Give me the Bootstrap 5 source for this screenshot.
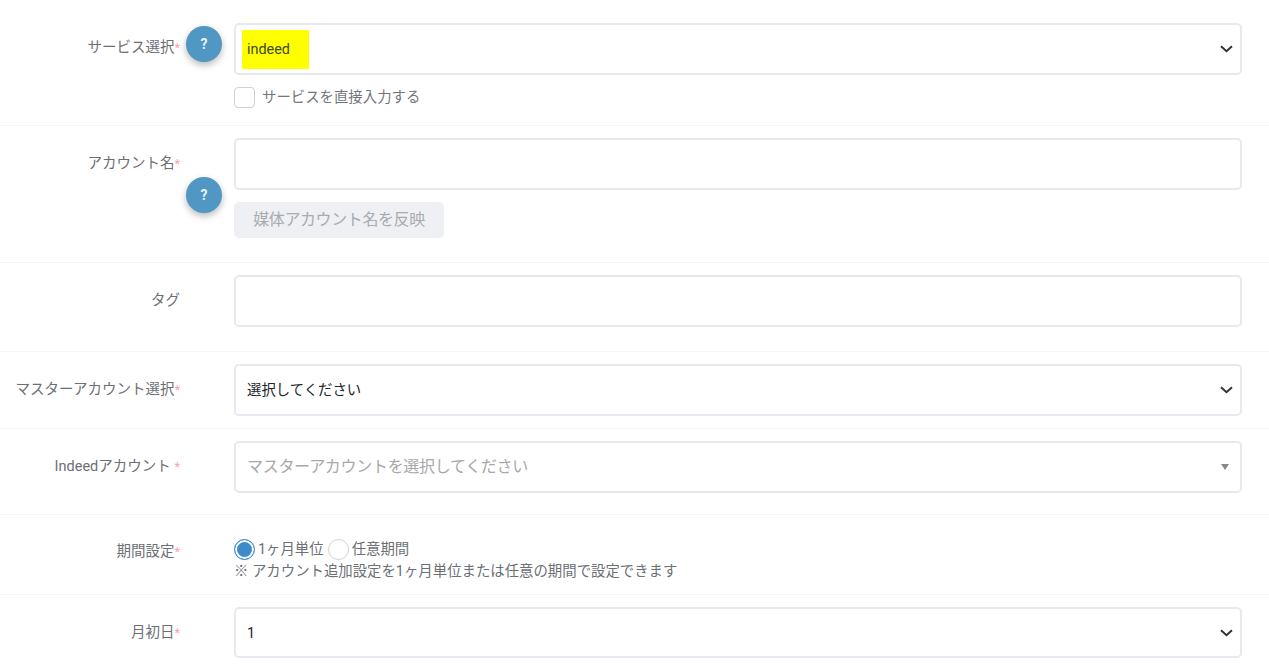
<!DOCTYPE html>
<html lang="ja">
<head>
<meta charset="utf-8">
<title>アカウント追加</title>
<link rel="stylesheet" href="https://cdn.jsdelivr.net/npm/bootstrap@5.3.0/dist/css/bootstrap.min.css">
<style>
body{font-family:Roboto,"Noto Sans CJK JP",sans-serif;font-size:14.4px;color:#6c7075;background:#fff;overflow:hidden}
.frm-row{display:flex;border-bottom:1px solid #f4f5f7;padding:12px 27px 0 0;position:relative}
.frm-label{width:180px;flex:none;text-align:right;font-size:14.5px;line-height:20px;color:#6c7075;padding-top:16px;white-space:nowrap}
.frm-label-up{padding-top:15px}
.req{color:#f8a5a5;font-size:13px}
.frm-body{margin-left:54px;flex:1 1 auto;min-width:0}
.frm-box.form-control,.frm-box.form-select{height:52px;border:2px solid #e6e9ef;border-radius:5px;box-shadow:none;font-size:14.4px;padding:1px 0 0 11px;display:flex;align-items:center;color:#495057;background-color:#fff}
.frm-box.form-select{background-image:url("data:image/svg+xml,%3csvg xmlns='http://www.w3.org/2000/svg' viewBox='0 0 13 8'%3e%3cpath fill='none' stroke='%23333' stroke-width='2' d='M1 1.2l5.5 5 5.5-5'/%3e%3c/svg%3e");background-position:right 7px center;background-size:13px 8px}
.frm-box-short.form-select{height:51px;padding-top:3px}
.frm-dark{color:#212529 !important}
.frm-ph{color:#a6a8ab !important;font-size:16px !important;letter-spacing:-.3px;padding-top:0 !important;background-image:url("data:image/svg+xml,%3csvg xmlns='http://www.w3.org/2000/svg' viewBox='0 0 8 8'%3e%3cpath fill='%23888' d='M0 1h8L4 7z'/%3e%3c/svg%3e") !important;background-position:right 11px center !important;background-size:8px 8px !important}
.hl-yellow{background:#ff0;height:39px;width:67px;margin:-1px 0 0 -5px;padding:1px 0 0 5px;display:flex;align-items:center;color:#3c4a1c;font-size:14.4px}
.help-dot{position:absolute;left:186px;width:36px;height:36px;border-radius:50%;background:#5098c3;color:#e8f2f8;font-weight:700;font-size:14px;display:flex;align-items:center;justify-content:center;box-shadow:0 3px 7px rgba(0,0,0,.28)}
.frm-check{display:flex;align-items:center;gap:7px;margin:12px 0 17px;height:21px;color:#73777c;font-size:14.4px}
.frm-check .form-check-input{width:21px;height:21px;margin:0;border:1px solid #cfd1d4;border-radius:4px;flex:none}
.frm-btn.btn{background:#eff0f3;border:0;color:#a9abae;font-size:16px;height:36px;width:210px;padding:0;margin:12px 0 24px;border-radius:5px;opacity:1;letter-spacing:-.4px;display:block}
.frm-radio-line{display:flex;align-items:center;height:21px;color:#6c7075;font-size:14.4px}
.frm-radio-line .form-check-input{width:21px;height:21px;margin:0 3px 0 0;flex:none;border:1px solid #cfd1d4}
.frm-radio-line .form-check-input:checked{background-image:none;background-color:#3f8acb;border:1.5px solid #3f8acb;box-shadow:inset 0 0 0 2px #fff}
.frm-radio-line .form-check-input + label + .form-check-input{margin-left:4px;margin-right:3px}
.frm-note{font-size:14.4px;line-height:20px;margin-top:2px;margin-bottom:12px;color:#6c7075}
</style>
</head>
<body>
<form>
  <div class="frm-row" style="padding-top:23px">
    <label class="frm-label frm-label-up">サービス選択<span class="req">*</span></label>
    <span class="help-dot" style="top:26px">?</span>
    <div class="frm-body">
      <div class="form-select frm-box"><span class="hl-yellow">indeed</span></div>
      <div class="frm-check"><input class="form-check-input" type="checkbox" id="c1"><label for="c1">サービスを直接入力する</label></div>
    </div>
  </div>
  <div class="frm-row">
    <label class="frm-label">アカウント名<span class="req">*</span></label>
    <span class="help-dot" style="top:51px">?</span>
    <div class="frm-body">
      <input class="form-control frm-box" type="text">
      <button class="btn frm-btn" type="button" disabled>媒体アカウント名を反映</button>
    </div>
  </div>
  <div class="frm-row">
    <label class="frm-label">タグ</label>
    <div class="frm-body"><input class="form-control frm-box mb-4" type="text"></div>
  </div>
  <div class="frm-row">
    <label class="frm-label">マスターアカウント選択<span class="req">*</span></label>
    <div class="frm-body"><div class="form-select frm-box frm-dark" style="margin-bottom:12px">選択してください</div></div>
  </div>
  <div class="frm-row">
    <label class="frm-label">Indeedアカウント <span class="req">*</span></label>
    <div class="frm-body"><div class="form-select frm-box frm-ph" style="margin-bottom:21px">マスターアカウントを選択してください</div></div>
  </div>
  <div class="frm-row" style="padding-top:24px">
    <label class="frm-label" style="padding-top:3px">期間設定<span class="req">*</span></label>
    <div class="frm-body">
      <div class="frm-radio-line">
        <input class="form-check-input" type="radio" name="p" id="r1" checked><label for="r1">1ヶ月単位</label>
        <input class="form-check-input" type="radio" name="p" id="r2"><label for="r2">任意期間</label>
      </div>
      <div class="frm-note">※ アカウント追加設定を1ヶ月単位または任意の期間で設定できます</div>
    </div>
  </div>
  <div class="frm-row border-0">
    <label class="frm-label">月初日<span class="req">*</span></label>
    <div class="frm-body"><div class="form-select frm-box frm-box-short frm-dark">1</div></div>
  </div>
</form>
</body>
</html>
